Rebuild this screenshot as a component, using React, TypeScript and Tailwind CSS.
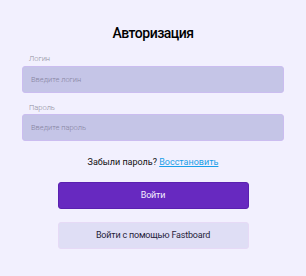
export default function App() {
  return (
    <div
      className="w-[306px] h-[276px] bg-[#f2f0fe] pt-[24px]"
      style={{ fontFamily: "Roboto, 'Noto Sans', sans-serif" }}
    >
      <h1 className="text-center text-[14px] leading-[18px] font-medium tracking-[-0.5px] text-black">
        Авторизация
      </h1>

      <div className="mx-[22px] mt-[12px]">
        <label className="block pl-[7px] text-[7.5px] leading-[9px] font-light text-[#8e8e9c]">Логин</label>
        <div className="mt-[3px] flex h-[27px] items-center rounded-[3px] border border-[#cbbdf0] bg-[#c5c5e7] px-[8px] text-[7.5px] font-light text-[#85849f]">
          Введите логин
        </div>

        <label className="mt-[10px] block pl-[7px] text-[7.5px] leading-[9px] font-light text-[#8e8e9c]">Пароль</label>
        <div className="mt-[2px] flex h-[27px] items-center rounded-[3px] border border-[#cbbdf0] bg-[#c5c5e7] px-[8px] text-[7.5px] font-light text-[#85849f]">
          Введите пароль
        </div>
      </div>

      <p className="mt-[15px] text-center text-[9px] leading-[12px] text-[#111]">
        Забыли пароль?{" "}
        <a className="text-[#1a9fe8] underline">Восстановить</a>
      </p>

      <div className="mx-auto mt-[14px] flex w-[191px] flex-col gap-[13px]">
        <button className="h-[27px] rounded-[3px] border border-[#5a20b0] bg-[#6729c0] text-[9px] tracking-[-0.2px] text-[#f3eefe]">
          Войти
        </button>
        <button className="h-[27px] rounded-[3px] border border-[#e6daf6] bg-[#dfdef5] text-[9px] tracking-[-0.2px] text-[#1f1d3a]">
          Войти с помощью Fastboard
        </button>
      </div>
    </div>
  );
}
